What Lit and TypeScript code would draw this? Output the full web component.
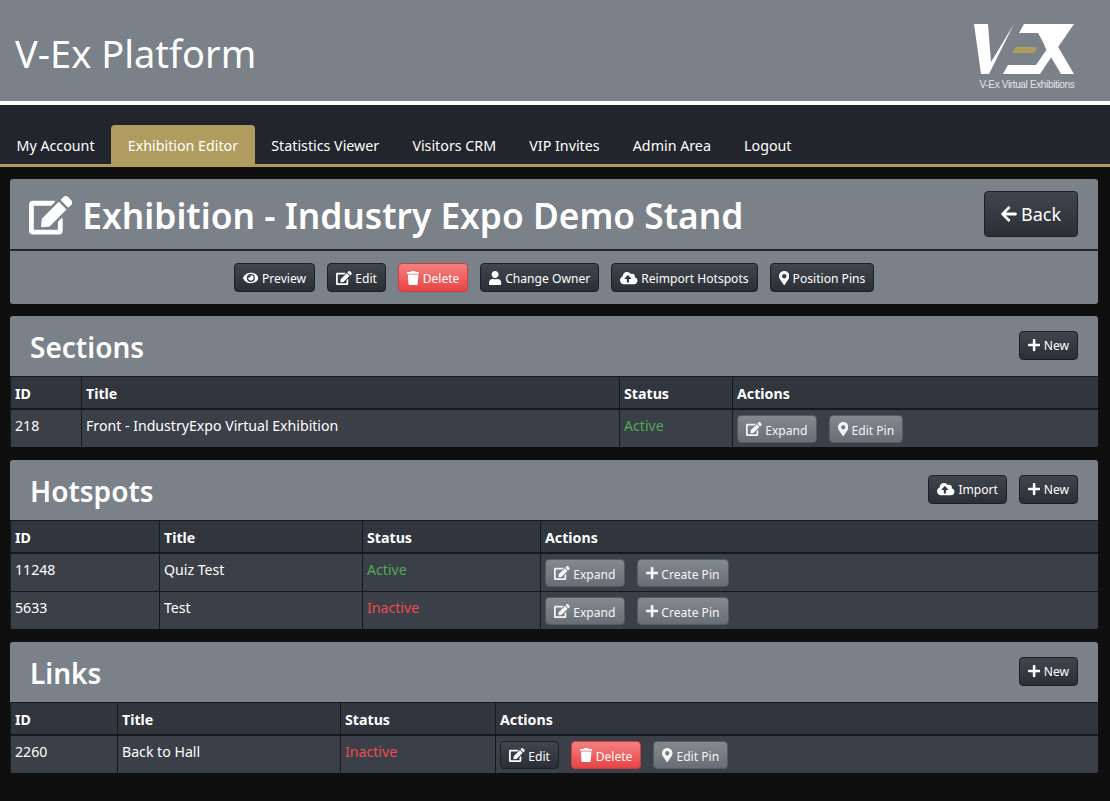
import { LitElement, html, css } from "lit";
import { customElement } from "lit/decorators.js";

const ICONS: Record<string, [number, string]> = {
  edit: [576, "M402.6 83.2l90.2 90.2c3.8 3.8 3.8 10 0 13.8L274.4 405.6l-92.8 10.3c-12.4 1.4-22.9-9.1-21.5-21.5l10.3-92.8L388.8 83.2c3.8-3.8 10-3.8 13.8 0zm162-22.9l-48.8-48.8c-15.2-15.2-39.9-15.2-55.2 0l-35.4 35.4c-3.8 3.8-3.8 10 0 13.8l90.2 90.2c3.8 3.8 10 3.8 13.8 0l35.4-35.4c15.2-15.3 15.2-40 0-55.2zM384 346.2V448H64V128h229.8c3.2 0 6.2-1.3 8.5-3.5l40-40c7.6-7.6 2.2-20.5-8.5-20.5H48C21.5 64 0 85.5 0 112v352c0 26.5 21.5 48 48 48h352c26.5 0 48-21.5 48-48V306.2c0-10.7-12.9-16-20.5-8.5l-40 40c-2.2 2.3-3.5 5.3-3.5 8.5z"],
  eye: [576, "M572.52 241.4C518.29 135.59 410.93 64 288 64S57.68 135.64 3.48 241.41a32.35 32.35 0 0 0 0 29.19C57.71 376.41 165.07 448 288 448s230.32-71.64 284.52-177.41a32.35 32.35 0 0 0 0-29.19zM288 400a144 144 0 1 1 144-144 143.93 143.93 0 0 1-144 144zm0-240a95.31 95.31 0 0 0-25.31 3.79 47.85 47.85 0 0 1-66.9 66.9A95.78 95.78 0 1 0 288 160z"],
  trash: [448, "M432 32H312l-9.4-18.7A24 24 0 0 0 281.1 0H166.8a23.72 23.72 0 0 0-21.4 13.3L136 32H16A16 16 0 0 0 0 48v32a16 16 0 0 0 16 16h416a16 16 0 0 0 16-16V48a16 16 0 0 0-16-16zM53.2 467a48 48 0 0 0 47.9 45h245.8a48 48 0 0 0 47.9-45L416 128H32z"],
  user: [448, "M224 256c70.7 0 128-57.3 128-128S294.7 0 224 0 96 57.3 96 128s57.3 128 128 128zm89.6 32h-16.7c-22.2 10.2-46.9 16-72.9 16s-50.6-5.8-72.9-16h-16.7C60.2 288 0 348.2 0 422.4V464c0 26.5 21.5 48 48 48h352c26.5 0 48-21.5 48-48v-41.6c0-74.2-60.2-134.4-134.4-134.4z"],
  cloud: [640, "M537.6 226.6c4.1-10.7 6.4-22.4 6.4-34.6 0-53-43-96-96-96-19.7 0-38.1 6-53.3 16.2C367 64.2 315.3 32 256 32c-88.4 0-160 71.6-160 160 0 2.7.1 5.4.2 8.1C40.2 219.8 0 273.2 0 336c0 79.5 64.5 144 144 144h368c70.7 0 128-57.3 128-128 0-61.9-44-113.6-102.4-125.4zM393.4 288H328v112c0 8.8-7.2 16-16 16h-48c-8.8 0-16-7.2-16-16V288h-65.4c-14.3 0-21.4-17.2-11.3-27.3l105.4-105.4c6.2-6.2 16.4-6.2 22.6 0l105.4 105.4c10.1 10.1 2.9 27.3-11.3 27.3z"],
  pin: [384, "M172.268 501.67C26.97 291.031 0 261.171 0 192 0 85.961 85.961 0 192 0s192 85.961 192 192c0 69.17-26.97 99.031-172.268 309.67-9.535 13.774-29.93 13.773-39.464 0zM192 272c44.183 0 80-35.817 80-80s-35.817-80-80-80-80 35.817-80 80 35.817 80 80 80z"],
  plus: [448, "M416 208H272V64c0-17.67-14.33-32-32-32h-32c-17.67 0-32 14.33-32 32v144H32c-17.67 0-32 14.33-32 32v32c0 17.67 14.33 32 32 32h144v144c0 17.67 14.33 32 32 32h32c17.67 0 32-14.33 32-32V304h144c17.67 0 32-14.33 32-32v-32c0-17.67-14.33-32-32-32z"],
  back: [448, "M257.5 445.1l-22.2 22.2c-9.4 9.4-24.6 9.4-33.9 0L7 273c-9.4-9.4-9.4-24.6 0-33.9L201.4 44.7c9.4-9.4 24.6-9.4 33.9 0l22.2 22.2c9.5 9.5 9.3 25-.4 34.3L136.6 216H424c13.3 0 24 10.7 24 24v32c0 13.3-10.7 24-24 24H136.6l120.5 114.8c9.8 9.3 10 24.8.4 34.3z"],
};

const icon = (name: string) => {
  const [w, d] = ICONS[name];
  return html`<svg class="ico" viewBox="0 0 ${w} 512" style="width:${w / 512}em" aria-hidden="true"><path fill="currentColor" d=${d}></path></svg>`;
};

type Btn = [string, string, string?];
const btn = ([ic, label, kind = "dark"]: Btn) =>
  html`<button class="btn ${kind}">${icon(ic)}<span>${label}</span></button>`;

type Row = { id: string; title: string; status: string; actions: Btn[] };
type Section = { name: string; cols: number[]; head: Btn[]; rows: Row[] };

const SECTIONS: Section[] = [
  {
    name: "Sections", cols: [71, 538, 113, 366], head: [["plus", "New"]],
    rows: [{ id: "218", title: "Front - IndustryExpo Virtual Exhibition", status: "Active",
      actions: [["edit", "Expand", "grey"], ["pin", "Edit Pin", "grey"]] }],
  },
  {
    name: "Hotspots", cols: [149, 203, 178, 558], head: [["cloud", "Import"], ["plus", "New"]],
    rows: [
      { id: "11248", title: "Quiz Test", status: "Active", actions: [["edit", "Expand", "grey"], ["plus", "Create Pin", "grey"]] },
      { id: "5633", title: "Test", status: "Inactive", actions: [["edit", "Expand", "grey"], ["plus", "Create Pin", "grey"]] },
    ],
  },
  {
    name: "Links", cols: [107, 223, 155, 603], head: [["plus", "New"]],
    rows: [{ id: "2260", title: "Back to Hall", status: "Inactive",
      actions: [["edit", "Edit"], ["trash", "Delete", "red"], ["pin", "Edit Pin", "grey"]] }],
  },
];

const TOP: Btn[] = [
  ["eye", "Preview"], ["edit", "Edit"], ["trash", "Delete", "red"], ["user", "Change Owner"],
  ["cloud", "Reimport Hotspots"], ["pin", "Position Pins"],
];

const TABS = ["My Account", "Exhibition Editor", "Statistics Viewer", "Visitors CRM", "VIP Invites", "Admin Area", "Logout"];

@customElement("app-root")
export class AppRoot extends LitElement {
  static styles = css`
    :host { display: block; min-height: 801px; background: #0f0f0f; color: #fff;
      font-family: "Noto Sans", "Open Sans", sans-serif; font-size: 14px; }
    * { box-sizing: border-box; }
    .top { height: 105px; background: #7a8188; border-bottom: 4px solid #fff; display: flex;
      justify-content: space-between; padding: 0 34px 0 15px; }
    .brand { font-size: 38px; font-weight: 400; margin: 0; line-height: 106px; }
    .logo { width: 102px; margin-top: 24px; display: flex; flex-direction: column; align-items: center; }
    .logo svg { width: 102px; height: 51px; display: block; }
    .logo span { font-family: "Liberation Sans", sans-serif; font-size: 10px; line-height: 12px; color: #e4e6e8; white-space: nowrap; margin-top: 4px; margin-left: 4px; letter-spacing: -.35px; }
    nav { height: 62px; background: #22252b; border-bottom: 3px solid #b19c60; display: flex; align-items: flex-end; }
    .tab { height: 39px; padding: 0 16.7px 0 16.5px; font-size: 14.25px; line-height: 41px; border-radius: 4px 4px 0 0; color: #fff; }
    .tab.on { background: #b19c60; }
    main { padding: 12px 12px 0 10px; }
    .panel { background: #7a8188; border-radius: 3px; overflow: hidden; margin-bottom: 13px; }
    .panel.head { margin-bottom: 12px; }
    .ph { display: flex; align-items: center; justify-content: space-between; padding: 0 20px 0 19px; height: 70px; }
    h1 { margin: 3px 0 0; font-size: 35.3px; font-weight: 600; line-height: 1; display: flex; align-items: center; gap: 10px; }
    h1 .ico { font-size: 38.5px; }
    .btn { display: inline-flex; align-items: center; gap: 3.5px; height: 29px; padding: 0 8px; border: 1px solid #1c1f24; border-radius: 4px;
      font: inherit; font-size: 12.1px; color: #fff; background: linear-gradient(#41464e, #2a2e35); white-space: nowrap; }
    .btn.big { height: 46px; font-size: 18px; padding: 0 16px; gap: 4px; }
    .btn.big .ico { font-size: 18px; }
    .bar { border-top: 2px solid #23262b; height: 55px; display: flex; justify-content: center; align-items: center; gap: 12px; }
    .bar .btn span { padding-top: 2px; }
    .sh { height: 60px; display: flex; align-items: center; justify-content: space-between; padding: 1px 20px 0; }
    h2 { margin: 0; font-size: 28px; font-weight: 600; line-height: 1; }
    .acts { display: flex; gap: 12px; margin-top: -3px; }
    .btn.red { background: linear-gradient(#f58080, #e74444); border-color: #c94040; }
    .btn.grey { background: linear-gradient(#82898f, #686e75); border-color: #565b61; color: #f4f5f5; }
    .ico { height: 1em; display: block; flex: none; }
    .btn .ico { font-size: 14px; }
    table { width: 1088px; table-layout: fixed; border-collapse: separate; border-spacing: 0; background: #0f0f0f; }
    th, td { text-align: left; padding: 0 4px; border-left: 1px solid #16181b; vertical-align: top; }
    th { background: #31353d; font-weight: 700; font-size: 14.2px; height: 34px; padding-top: 2px; line-height: 29px; border-top: 1px solid #16181b; border-bottom: 2px solid #16181b; }
    td { background: #3b3f47; font-size: 14.13px; height: 37px; line-height: 32px; }
    tbody tr + tr td { border-top: 1px solid #16181b; height: 38px; }
    .on-s { color: #4caf50; } .off-s { color: #ee4d4d; }
    .rowacts { display: flex; gap: 12px; padding-top: 5px; }
    .rowacts .btn { height: 28px; }
    .rowacts .btn span { padding-top: 3px; }
  `;

  render() {
    return html`
      <header class="top">
        <div class="brand">V-Ex Platform</div>
        <div class="logo">
          <svg viewBox="0 0 102 51" aria-hidden="true">
            <polygon fill="#fff" points="0,0 14,0 17,38 40,0 15,50 7,50" />
            <polygon fill="#fff" points="50,0 100,0 78,32 66,50 29,50 34,41 62,41 73,25 64,9 45,9" />
            <polygon fill="#fff" points="66,9 76,9 100,50 87,50 71,23" />
            <polygon fill="#b19c60" points="42,23 62,23 63,25 60,29 38,29" />
          </svg>
          <span>V-Ex Virtual Exhibitions</span>
        </div>
      </header>
      <nav>${TABS.map((t) => html`<div class="tab ${t === "Exhibition Editor" ? "on" : ""}">${t}</div>`)}</nav>
      <main>
        <section class="panel head">
          <div class="ph">
            <h1>${icon("edit")}<span>Exhibition - Industry Expo Demo Stand</span></h1>
            <button class="btn big">${icon("back")}<span>Back</span></button>
          </div>
          <div class="bar">${TOP.map(btn)}</div>
        </section>
        ${SECTIONS.map((s) => html`
          <section class="panel">
            <div class="sh"><h2>${s.name}</h2><div class="acts">${s.head.map(btn)}</div></div>
            <table>
              <colgroup>${s.cols.map((c) => html`<col style="width:${c}px" />`)}</colgroup>
              <thead><tr><th>ID</th><th>Title</th><th>Status</th><th>Actions</th></tr></thead>
              <tbody>${s.rows.map((r) => html`<tr>
                <td>${r.id}</td><td>${r.title}</td>
                <td class=${r.status === "Active" ? "on-s" : "off-s"}>${r.status}</td>
                <td><div class="rowacts">${r.actions.map(btn)}</div></td>
              </tr>`)}</tbody>
            </table>
          </section>`)}
      </main>
    `;
  }
}
